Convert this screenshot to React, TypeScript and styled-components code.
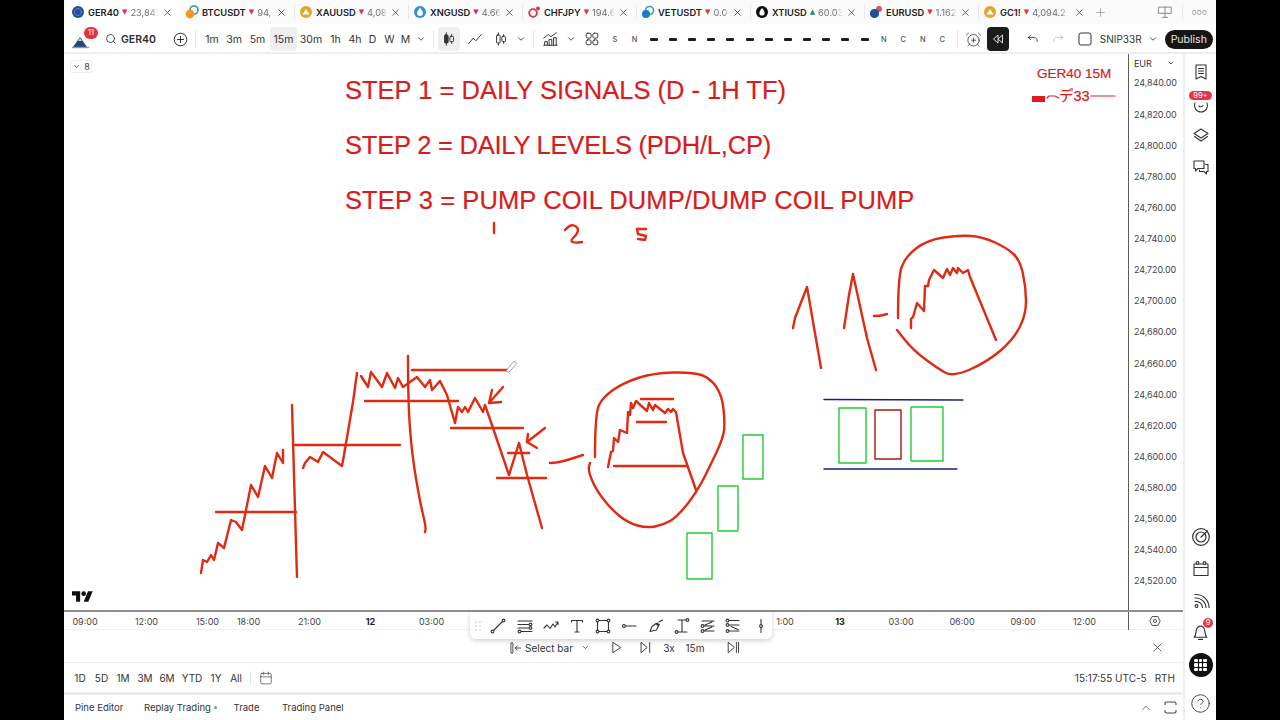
import React from 'react'
import styled, { createGlobalStyle } from 'styled-components'
import {
  AlarmClockPlus,
  Calendar,
  ChevronDown,
  ChevronUp,
  CircleHelp,
  Plus,
  Search,
  X,
} from 'lucide-react'

const GlobalStyle = createGlobalStyle`
  * {
    margin: 0;
    padding: 0;
    box-sizing: border-box;
  }

  html, body {
    width: 1280px;
    height: 720px;
    overflow: hidden;
    background: #000;
  }

  body {
    font-family: 'Inter', 'Liberation Sans', sans-serif;
    color: #2e2e2e;
    -webkit-font-smoothing: antialiased;
  }
`

const Root = styled.div`
  width: 1280px;
  height: 720px;
  padding: 0 64px;
  background: #000;
`

const Screen = styled.div`
  width: 1152px;
  height: 720px;
  display: flex;
  flex-direction: column;
  background: #fff;
  overflow: hidden;
`

/* top tabs */

const TabStrip = styled.div`
  height: 24px;
  flex: none;
  display: flex;
  align-items: center;
  padding-left: 2px;
  background: #fbfbfb;
`

const Tab = styled.div<{ $active?: boolean }>`
  width: 114px;
  height: 24px;
  flex: none;
  display: flex;
  align-items: center;
  gap: 3px;
  padding: 0 7px 0 5px;
  background: ${p => (p.$active ? '#fff' : 'transparent')};
  position: relative;

  & + &::before {
    content: '';
    position: absolute;
    left: 0;
    top: 5px;
    bottom: 5px;
    width: 1px;
    background: #e8e8e8;
  }
`

const TabName = styled.span`
  font-size: 9.3px;
  font-weight: 600;
  color: #222;
  white-space: nowrap;
`

const TabArrow = styled.span<{ $up?: boolean }>`
  font-family: 'DejaVu Sans', sans-serif;
  font-size: 7px;
  color: ${p => (p.$up ? '#1f8a70' : '#d8344a')};
`

const TabPrice = styled.span`
  flex: 1;
  min-width: 0;
  overflow: hidden;
  white-space: nowrap;
  font-size: 9.3px;
  color: #6f6f6f;
  -webkit-mask-image: linear-gradient(90deg, #000 70%, transparent 100%);
  mask-image: linear-gradient(90deg, #000 70%, transparent 100%);
`

const TabClose = styled(X)`
  flex: none;
  color: #333;
`

const TabTail = styled.div`
  flex: 1;
  display: flex;
  align-items: center;
  padding-left: 2px;
  color: #8a8a8a;
`

const TabTailRight = styled.div`
  margin-left: auto;
  display: flex;
  align-items: center;
  color: #888;
  padding-right: 9px;
  gap: 9px;
`

const TailDots = styled.span`
  font-size: 8px;
  letter-spacing: 0.3px;
  color: #999;
`

const TailSep = styled.span`
  width: 1px;
  height: 14px;
  background: #e8e8e8;
`

/* main toolbar */

const Toolbar = styled.div`
  height: 28px;
  flex: none;
  display: flex;
  align-items: center;
  padding: 2px 0 0 8px;
`

const Strip = styled.div`
  height: 2px;
  flex: none;
  background: #eeeeee;
`

const ToolCell = styled.div<{ $w: number; $active?: boolean; $dark?: boolean }>`
  width: ${p => p.$w}px;
  height: 24px;
  flex: none;
  display: flex;
  align-items: center;
  justify-content: center;
  border-radius: 4px;
  font-size: 10.5px;
  color: ${p => (p.$dark ? '#ddd' : '#333')};
  background: ${p => (p.$dark ? '#1b1b1b' : p.$active ? '#eeeeee' : 'transparent')};
`

const ToolSep = styled.span<{ $mx?: number }>`
  width: 1px;
  height: 18px;
  flex: none;
  background: #e6e6e6;
  margin: 0 ${p => p.$mx ?? 0}px;
`

const AvatarWrap = styled.div`
  width: 28px;
  height: 24px;
  flex: none;
  position: relative;
  display: flex;
  align-items: center;
`

const AvatarBadge = styled.span`
  position: absolute;
  top: 0;
  left: 12px;
  width: 14px;
  height: 12px;
  border-radius: 6px;
  background: #e0343f;
  color: #fff;
  font-size: 7.5px;
  line-height: 12px;
  text-align: center;
`

const SymbolBox = styled.div`
  width: 68px;
  flex: none;
  display: flex;
  align-items: center;
  gap: 4px;
  padding-left: 5px;
  font-size: 10.5px;
  font-weight: 600;
  color: #2e2e2e;
`

const Letter = styled.span`
  font-size: 7.5px;
  font-weight: 500;
  color: #555;
`

const Dash = styled.span`
  width: 8px;
  height: 3px;
  border-radius: 1px;
  background: #1d1d1d;
`

const TemplateName = styled.span`
  width: 50px;
  flex: none;
  font-size: 10px;
  color: #333;
  padding-left: 2px;
  white-space: nowrap;
`

const PublishBtn = styled.button`
  width: 48px;
  height: 19px;
  flex: none;
  margin-left: 6px;
  border: 0;
  border-radius: 10px;
  background: #161616;
  color: #e8e8e8;
  font-family: inherit;
  font-size: 10.5px;
`

/* body */

const Body = styled.div`
  flex: 1;
  min-height: 0;
  display: flex;
`

const Workspace = styled.div`
  width: 1119px;
  flex: none;
  display: flex;
  flex-direction: column;
  position: relative;
`

const ChartRow = styled.div`
  height: 558px;
  flex: none;
  display: flex;
  border-bottom: 2px solid #8d8d8d;
`

const Canvas = styled.div`
  flex: 1;
  position: relative;
  overflow: hidden;
`

const Drawing = styled.svg`
  position: absolute;
  inset: 0;
  width: 1064px;
  height: 556px;
`

const Note = styled.div<{ $x: number; $y: number; $size: number; $ls?: number }>`
  position: absolute;
  left: ${p => p.$x}px;
  top: ${p => p.$y}px;
  font-family: 'Liberation Sans', Arial, sans-serif;
  font-size: ${p => p.$size}px;
  letter-spacing: ${p => p.$ls ?? 0}px;
  line-height: 1;
  color: #d81c1c;
  -webkit-text-stroke: 0.2px #d81c1c;
  white-space: nowrap;
`

const NoteJa = styled(Note)`
  font-family: 'Liberation Sans', 'Noto Sans CJK JP', sans-serif;
`

const LegendChip = styled.div`
  position: absolute;
  left: 6px;
  top: 6px;
  width: 22px;
  height: 13px;
  display: flex;
  align-items: center;
  justify-content: center;
  gap: 3px;
  border: 1px solid #eeeeee;
  border-radius: 2px;
  font-size: 9px;
  color: #444;
`

const Logo = styled.svg`
  position: absolute;
  left: 8px;
  bottom: 7px;
  width: 21px;
  height: 14px;
`

const PriceScale = styled.div`
  width: 55px;
  flex: none;
  border-left: 1px solid #5c5c5c;
  padding-left: 5px;
  font-size: 9px;
  letter-spacing: -0.1px;
  color: #444;
`

const Currency = styled.div`
  height: 18.4px;
  display: flex;
  align-items: center;
  justify-content: space-between;
  padding-right: 8px;
  font-size: 9px;
  color: #333;
`

const PriceLabel = styled.div`
  height: 31.125px;
  line-height: 21px;
  white-space: nowrap;
`

const TimeAxis = styled.div`
  height: 18px;
  flex: none;
  display: flex;
  align-items: center;
  padding-top: 1px;
  font-size: 9px;
  color: #444;
  border-bottom: 1px solid #f0f0f0;
`

const Tick = styled.span<{ $w: number; $bold?: boolean }>`
  width: ${p => p.$w}px;
  flex: none;
  text-align: center;
  font-weight: ${p => (p.$bold ? 700 : 400)};
  color: ${p => (p.$bold ? '#222' : '#444')};
`

const AxisCorner = styled.div`
  width: 55px;
  height: 18px;
  flex: none;
  margin-left: auto;
  padding-right: 2px;
  border-left: 1px solid #5c5c5c;
  display: flex;
  align-items: center;
  justify-content: center;
`

const FloatingTools = styled.div`
  position: absolute;
  left: 406px;
  top: 558px;
  width: 302px;
  height: 27px;
  display: flex;
  align-items: center;
  padding-left: 1.5px;
  background: #fff;
  border-radius: 0 0 6px 6px;
  box-shadow: 0 2px 5px rgba(0, 0, 0, 0.18);
`

const ToolGlyph = styled.div<{ $w: number }>`
  width: ${p => p.$w}px;
  flex: none;
  display: flex;
  justify-content: center;
  color: #333;
`

const ReplayBar = styled.div`
  height: 33px;
  flex: none;
  display: flex;
  align-items: center;
  padding: 3px 18px 0 444px;
  border-bottom: 1px solid #f0f0f0;
  font-size: 10px;
  color: #333;
`

const ReplayItem = styled.div<{ $w: number }>`
  width: ${p => p.$w}px;
  flex: none;
  display: flex;
  align-items: center;
  justify-content: center;
  white-space: nowrap;
`

const CloseSlot = styled.div`
  margin-left: auto;
  display: flex;
`

const RangeBar = styled.div`
  height: 29px;
  flex: none;
  display: flex;
  align-items: center;
  padding-left: 5px;
  padding-right: 8px;
  font-size: 10px;
  color: #333;
`

const RangeBtn = styled.span<{ $w: number }>`
  width: ${p => p.$w}px;
  flex: none;
  text-align: center;
`

const RangeRight = styled.div`
  margin-left: auto;
  display: flex;
  gap: 8px;
  font-size: 10px;
  color: #333;
  white-space: nowrap;
`

const Gap = styled.div`
  height: 3px;
  flex: none;
  background: #ebebeb;
`

const PanelTabs = styled.div`
  flex: 1;
  display: flex;
  align-items: center;
  padding: 0 6px 0 11px;
  font-size: 9.5px;
  color: #333;
`

const PanelTab = styled.div<{ $w: number; $active?: boolean }>`
  width: ${p => p.$w}px;
  height: 17px;
  flex: none;
  display: flex;
  align-items: center;
  gap: 3px;
  justify-content: ${p => (p.$active ? 'center' : 'flex-start')};
  white-space: nowrap;
`

const GreenDot = styled.span`
  width: 3px;
  height: 3px;
  border-radius: 50%;
  background: #55b57c;
`

const PanelRight = styled.div`
  margin-left: auto;
  display: flex;
  align-items: center;
  gap: 11px;
  color: #444;
`

/* right rail */

const SideBar = styled.div`
  flex: 1;
  display: flex;
  flex-direction: column;
  align-items: center;
  padding-top: 2px;
  border-left: 2px solid #efefef;
  color: #333;
`

const SideItem = styled.div<{ $h?: number; $auto?: boolean; $pt?: number }>`
  width: 31px;
  height: ${p => p.$h ?? 32}px;
  flex: none;
  position: relative;
  display: flex;
  align-items: center;
  justify-content: center;
  padding-top: ${p => p.$pt ?? 0}px;
  margin-top: ${p => (p.$auto ? 'auto' : 0)};
`

const SideBadge = styled.span<{ $wide?: boolean }>`
  position: absolute;
  top: ${p => (p.$wide ? 3 : 2)}px;
  left: ${p => (p.$wide ? 4 : 18)}px;
  min-width: ${p => (p.$wide ? 23 : 10)}px;
  height: ${p => (p.$wide ? 9 : 10)}px;
  border-radius: 5px;
  background: #e5364a;
  color: #fff;
  font-size: 7.5px;
  line-height: ${p => (p.$wide ? 9 : 10)}px;
  text-align: center;
`

const AppsDisc = styled.div`
  width: 24px;
  height: 24px;
  border-radius: 50%;
  background: #111;
  display: grid;
  grid-template-columns: repeat(3, 3.5px);
  grid-auto-rows: 3.5px;
  gap: 1.2px;
  align-content: center;
  justify-content: center;
`

const AppsDot = styled.span`
  background: #fff;
  border-radius: 1px;
`

/* helpers */

const tabs = [
  { icon: 'eu', name: 'GER40', price: '23,842', active: true },
  { icon: 'btc', name: 'BTCUSDT', price: '94,2' },
  { icon: 'gold', name: 'XAUUSD', price: '4,083' },
  { icon: 'gas', name: 'XNGUSD', price: '4.660' },
  { icon: 'chf', name: 'CHFJPY', price: '194.6' },
  { icon: 'vet', name: 'VETUSDT', price: '0.01' },
  { icon: 'oil', name: 'XTIUSD', price: '60.031', up: true },
  { icon: 'eur', name: 'EURUSD', price: '1.162' },
  { icon: 'gold', name: 'GC1!', price: '4,094.2 -' },
]

const intervals: [string, number][] = [
  ['1m', 22], ['3m', 22], ['5m', 25], ['15m', 27], ['30m', 28], ['1h', 21],
  ['4h', 18], ['D', 17], ['W', 17], ['M', 15],
]

const prices = [
  '24,840.00', '24,820.00', '24,800.00', '24,780.00', '24,760.00', '24,740.00',
  '24,720.00', '24,700.00', '24,680.00', '24,660.00', '24,640.00', '24,620.00',
  '24,600.00', '24,580.00', '24,560.00', '24,540.00', '24,520.00',
]

const ticks: [string, number, boolean?][] = [
  ['09:00', 42], ['12:00', 81], ['15:00', 41], ['18:00', 41], ['21:00', 81],
  ['12', 41, true], ['03:00', 81], ['', 292], ['1:00', 42], ['13', 68, true],
  ['03:00', 54], ['06:00', 68], ['09:00', 54], ['12:00', 69],
]

const ranges: [string, number][] = [
  ['1D', 22], ['5D', 21], ['1M', 22], ['3M', 22], ['6M', 22], ['YTD', 28],
  ['1Y', 20], ['All', 20],
]

type Pt = [number, number]

const line = (pts: Pt[]) => pts.map(p => p.join(',')).join(' ')

// rounds a hand drawn loop through the midpoints of its points
const smooth = (pts: Pt[]) => {
  let d = `M${pts[0][0]} ${pts[0][1]}`
  for (let i = 1; i < pts.length - 1; i++) {
    const mx = (pts[i][0] + pts[i + 1][0]) / 2
    const my = (pts[i][1] + pts[i + 1][1]) / 2
    d += ` Q${pts[i][0]} ${pts[i][1]} ${mx} ${my}`
  }
  const last = pts[pts.length - 1]
  return `${d} L${last[0]} ${last[1]}`
}

const squiggles: Pt[][] = [
  [[201, 573], [203, 560], [207, 562], [211, 555], [214, 560], [218, 543], [224, 548], [231, 520], [236, 522], [242, 530], [251, 485], [258, 497], [265, 466], [272, 478], [277, 453], [283, 463], [283, 450]],
  [[303, 468], [305, 463], [310, 457], [318, 462], [323, 452], [342, 466], [344, 455], [353, 402], [357, 373]],
  [[361, 376], [368, 387], [371, 372], [382, 387], [387, 373], [395, 388], [398, 378], [403, 387], [417, 377], [425, 387], [430, 380], [432, 390], [440, 381], [447, 395], [455, 423], [458, 407], [462, 412], [465, 407], [468, 412], [475, 398], [483, 412], [485, 405], [493, 428], [509, 475], [519, 443], [527, 475], [542, 528]],
  [[489, 403], [503, 387]],
  [[492, 390], [489, 403], [501, 402]],
  [[527, 442], [545, 428]],
  [[528, 434], [527, 442], [537, 448]],
  [[608, 467], [611, 452], [613, 451], [614, 438], [618, 442], [620, 430], [627, 433], [628, 412], [630, 415], [631, 403], [633, 408], [636, 401], [647, 411], [649, 403], [653, 410], [655, 405], [665, 413], [668, 409], [671, 412], [673, 409], [676, 412], [683, 453], [696, 490]],
  [[793, 328], [795, 318], [807, 287], [821, 368]],
  [[844, 328], [849, 295], [853, 274], [867, 338], [876, 370]],
  [[911, 328], [911, 319], [913, 317], [917, 303], [924, 311], [925, 286], [928, 286], [929, 280], [934, 270], [943, 278], [947, 269], [950, 275], [953, 268], [957, 273], [958, 268], [963, 273], [968, 270], [970, 277], [996, 340]],
  [[494, 223], [494, 233]],
  [[646, 229], [637, 229], [638, 234], [646, 236], [645, 240], [638, 239]],
]

const loops: Pt[][] = [
  [[292, 405], [295, 512], [297, 577]],
  [[408, 356], [408, 402], [412, 455], [420, 502], [426, 527], [425, 532]],
  [[550, 463], [558, 463], [583, 455]],
  [[595, 457], [595, 413], [603, 397], [623, 383], [653, 373], [693, 372], [710, 378], [722, 395], [725, 423], [723, 438], [713, 460], [697, 492], [677, 517], [663, 525], [647, 528], [628, 523], [610, 508], [595, 488], [588, 470], [590, 463]],
  [[898, 318], [898, 278], [905, 257], [927, 240], [960, 235], [983, 237], [1007, 248], [1020, 260], [1026, 288], [1026, 315], [1013, 340], [987, 362], [953, 377], [937, 368], [913, 350], [897, 330]],
  [[874, 316], [880, 316], [887, 314]],
  [[565, 230], [570, 224], [578, 227], [578, 233], [570, 241], [575, 243], [582, 242]],
]

const levels: [number, number, number][] = [
  [216, 296, 512], [295, 400, 445], [412, 510, 370], [365, 458, 401], [451, 523, 428],
  [508, 529, 453], [497, 546, 478], [641, 673, 399], [637, 666, 422], [614, 687, 466],
]

const boxes: [number, number, number, number, string][] = [
  [743, 435, 20, 44, '#22cc33'], [718, 486, 20, 45, '#22cc33'], [687, 533, 25, 46, '#22cc33'],
  [839, 408, 27, 55, '#22cc33'], [875, 410, 26, 49, '#a81818'], [911, 407, 32, 54, '#22cc33'],
]

const TabIcon = ({ kind }: { kind: string }) => {
  const art: Record<string, React.ReactNode> = {
    eu: (
      <>
        <circle cx="7" cy="7" r="6" fill="#1f4e9e" />
        <circle cx="7" cy="7" r="3.4" fill="none" stroke="#9ec0e8" strokeWidth="1" strokeDasharray="1 1" />
      </>
    ),
    btc: (
      <>
        <circle cx="9" cy="5" r="4" fill="none" stroke="#2c9aa8" strokeWidth="1.6" />
        <circle cx="5" cy="9" r="4.4" fill="#f09a20" />
      </>
    ),
    gold: (
      <>
        <circle cx="7" cy="7" r="6" fill="#e3a52c" />
        <path d="M3.5 9.5 L7 4 L10.5 9.5 Z" fill="#fff" />
      </>
    ),
    gas: (
      <>
        <circle cx="7" cy="7" r="6" fill="#2f8fdc" />
        <path d="M7 2.8 C9 5.4 10 6.6 10 8 A3 3 0 0 1 4 8 C4 6.6 5 5.4 7 2.8 Z" fill="#fff" />
      </>
    ),
    chf: (
      <>
        <circle cx="6" cy="8" r="3.8" fill="none" stroke="#d8343e" strokeWidth="1.8" />
        <circle cx="11" cy="3.5" r="2" fill="#d8343e" />
      </>
    ),
    vet: (
      <>
        <circle cx="8.5" cy="5.5" r="4" fill="none" stroke="#25a6b8" strokeWidth="1.6" />
        <circle cx="5" cy="9" r="4" fill="#1f78c8" />
      </>
    ),
    oil: (
      <>
        <circle cx="7" cy="7" r="6" fill="#0c0c0c" />
        <path d="M7 3 C8.8 5.4 9.6 6.6 9.6 8 A2.6 2.6 0 0 1 4.4 8 C4.4 6.6 5.2 5.4 7 3 Z" fill="#fff" />
      </>
    ),
    eur: (
      <>
        <circle cx="10" cy="4" r="3" fill="#d8545e" />
        <circle cx="5.5" cy="8.5" r="4.6" fill="#1f4e9e" />
      </>
    ),
  }
  return (
    <svg width="14" height="14" viewBox="0 0 14 14" style={{ flex: 'none' }}>
      {art[kind]}
    </svg>
  )
}

const Glyph = ({ children, size = 16 }: { children: React.ReactNode; size?: number }) => (
  <svg width={size} height={size} viewBox="0 0 18 18" fill="none" stroke="currentColor" strokeWidth="1.1" strokeLinecap="round" strokeLinejoin="round">
    {children}
  </svg>
)

const End = ({ x, y }: { x: number; y: number }) => <circle cx={x} cy={y} r="1.4" fill="#fff" />

const drawTools: [number, React.ReactNode][] = [
  [28, <><path d="M4 14 L14 4" /><End x={3.5} y={14.5} /><End x={14.5} y={3.5} /></>],
  [26, <><path d="M2 4 H16 M2 7.5 H13 M2 11 H13 M5 14.5 H16" /><End x={14.5} y={7.5} /><End x={14.5} y={11} /><End x={3.5} y={14.5} /></>],
  [27, <path d="M2 11 L5 8 L8 11.5 L11 7 L13 10 L16 5 M13.5 5 H16 V7.5" />],
  [25, <path d="M3.5 5 V3.5 H14.5 V5 M9 3.5 V15 M7 15 H11" />],
  [26, <><path d="M4 3.5 H14 M4 14.5 H14 M3.5 4 V14 M14.5 4 V14" /><End x={3.5} y={3.5} /><End x={14.5} y={3.5} /><End x={3.5} y={14.5} /><End x={14.5} y={14.5} /></>],
  [27, <><path d="M6 9 H16" /><End x={4} y={9} /></>],
  [26, <path d="M3 14.5 L5 9.5 L9 6.5 L11.5 9 L9.5 13 Z M10 6 L12.5 8 M12 5 L15.5 3" />],
  [26, <><path d="M5 3 H13 M9 3 V15 M4.5 15 H14" /><End x={14.5} y={3} /><End x={3.5} y={15} /></>],
  [26, <><path d="M3 4 H15 M5 9 H15 M5 14 H15 M6 8 L13 5 M6 13 L13 10" /><End x={3.5} y={9} /><End x={3.5} y={14} /></>],
  [25, <><path d="M5 3.5 H15 M5 8 H15 M5 14 H15 M7 9.5 L14 12.5" /><End x={3.5} y={3.5} /><End x={3.5} y={8} /><End x={3.5} y={14} /></>],
  [30, <><path d="M9 2.5 V15.5" /><circle cx="9" cy="9" r="1.4" fill="#fff" /></>],
]

const App: React.FC = () => (
  <>
    <GlobalStyle />
    <Root>
      <Screen>
        <TabStrip>
          {tabs.map(tab => (
            <Tab key={tab.name} $active={tab.active}>
              <TabIcon kind={tab.icon} />
              <TabName>{tab.name}</TabName>
              <TabArrow $up={tab.up}>{tab.up ? '▲' : '▼'}</TabArrow>
              <TabPrice>{tab.price}</TabPrice>
              <TabClose size={11} strokeWidth={1.6} />
            </Tab>
          ))}
          <TabTail>
            <Plus size={13} strokeWidth={1.3} />
            <TabTailRight>
              <Glyph>
                <path d="M2 3.5 H16 V10.5 H2 Z M9 10.5 V15 M6 15 H12 M9 3.5 V10.5" />
              </Glyph>
              <TailSep />
              <TailDots>ooo</TailDots>
            </TabTailRight>
          </TabTail>
        </TabStrip>

        <Toolbar>
          <AvatarWrap>
            <svg width="18" height="14" viewBox="0 0 18 14" style={{ marginTop: 5 }}>
              <path d="M1 12 L8 2 L15 12 Z" fill="#27476e" />
              <path d="M6 6 L8 3 L10 6 Z" fill="#bcd2e8" />
              <path d="M0 12.5 H17" stroke="#6aa0c8" strokeWidth="1.4" />
            </svg>
            <AvatarBadge>11</AvatarBadge>
          </AvatarWrap>
          <SymbolBox>
            <Search size={12} strokeWidth={1.7} />
            GER40
          </SymbolBox>
          <ToolCell $w={24}>
            <svg width="15" height="15" viewBox="0 0 15 15" fill="none" stroke="#333" strokeWidth="1">
              <circle cx="7.5" cy="7.5" r="6.3" />
              <path d="M7.5 4 V11 M4 7.5 H11" />
            </svg>
          </ToolCell>
          <ToolSep $mx={3} />
          <ToolCell $w={2} />
          {intervals.map(([label, w]) => (
            <ToolCell key={label} $w={w} $active={label === '15m'}>{label}</ToolCell>
          ))}
          <ToolCell $w={16}><ChevronDown size={10} /></ToolCell>
          <ToolSep $mx={4} />
          <ToolCell $w={22} $active>
            <Glyph>
              <path d="M6 2 V4.5 M6 13.5 V16 M12 4 V6 M12 12 V14" />
              <rect x="4" y="4.5" width="4" height="9" rx="1" fill="currentColor" />
              <rect x="10" y="6" width="4" height="6" rx="1" />
            </Glyph>
          </ToolCell>
          <ToolCell $w={30}>
            <Glyph><path d="M2 14 L7 8 L10 11 L16 4" /></Glyph>
          </ToolCell>
          <ToolCell $w={22}>
            <Glyph>
              <path d="M6 2 V4.5 M6 13.5 V16 M12 4 V6 M12 12 V14" />
              <rect x="4" y="4.5" width="4" height="9" rx="1" />
              <rect x="10" y="6" width="4" height="6" rx="1" />
            </Glyph>
          </ToolCell>
          <ToolCell $w={18}><ChevronDown size={10} /></ToolCell>
          <ToolSep $mx={3} />
          <ToolCell $w={26}>
            <Glyph>
              <path d="M2 8 L7 4 L10 6.5 L16 2 M3 16 V12 H6 V16 M8 16 V9.5 H11 V16 M13 16 V7.5 H16 V16 M2 16 H17" />
            </Glyph>
          </ToolCell>
          <ToolCell $w={16}><ChevronDown size={10} /></ToolCell>
          <ToolCell $w={26}>
            <Glyph>
              <rect x="2.5" y="2.5" width="5.5" height="5.5" rx="1.8" />
              <rect x="10" y="2.5" width="5.5" height="5.5" rx="1.8" />
              <rect x="2.5" y="10" width="5.5" height="5.5" rx="1.8" />
              <rect x="10" y="10" width="5.5" height="5.5" rx="1.8" />
            </Glyph>
          </ToolCell>
          <ToolCell $w={20}><Letter>S</Letter></ToolCell>
          <ToolCell $w={19}><Letter>N</Letter></ToolCell>
          {Array.from({ length: 12 }, (_, i) => (
            <ToolCell key={i} $w={19.2}><Dash /></ToolCell>
          ))}
          <ToolCell $w={19}><Letter>N</Letter></ToolCell>
          <ToolCell $w={20}><Letter>C</Letter></ToolCell>
          <ToolCell $w={19}><Letter>N</Letter></ToolCell>
          <ToolCell $w={20}><Letter>C</Letter></ToolCell>
          <ToolSep $mx={5} />
          <ToolCell $w={20}>
            <AlarmClockPlus size={17} strokeWidth={1.1} />
          </ToolCell>
          <ToolCell $w={4} />
          <ToolCell $w={22} $dark>
            <svg width="12" height="12" viewBox="0 0 12 12" fill="none" stroke="#ddd" strokeWidth="1">
              <path d="M6 2 L1.5 6 L6 10 Z M10.5 2 L6 6 L10.5 10 Z" />
            </svg>
          </ToolCell>
          <ToolCell $w={12.5} />
          <ToolCell $w={22}>
            <Glyph size={14}><path d="M6 4 L3 7 L6 10 M3 7 H11 C13.5 7 14.5 9 14.5 12" /></Glyph>
          </ToolCell>
          <ToolCell $w={28}>
            <span style={{ color: '#bbb', display: 'flex' }}>
              <Glyph size={14}><path d="M12 4 L15 7 L12 10 M15 7 H7 C4.5 7 3.5 9 3.5 12" /></Glyph>
            </span>
          </ToolCell>
          <ToolCell $w={26}>
            <svg width="14" height="14" viewBox="0 0 14 14" fill="none" stroke="#333" strokeWidth="1">
              <rect x="1" y="1" width="12" height="12" rx="2" />
            </svg>
          </ToolCell>
          <TemplateName>SNIP33R</TemplateName>
          <ToolCell $w={11}><ChevronDown size={10} /></ToolCell>
          <PublishBtn>Publish</PublishBtn>
        </Toolbar>
        <Strip />

        <Body>
          <Workspace>
            <ChartRow>
              <Canvas>
                <Drawing viewBox="64 54 1064 556" fill="none" strokeLinecap="round" strokeLinejoin="round">
                  <g stroke="#e02a12" strokeWidth="2.4">
                    {squiggles.map((pts, i) => <polyline key={i} points={line(pts)} />)}
                    {loops.map((pts, i) => <path key={i} d={smooth(pts)} />)}
                    {levels.map(([x1, x2, y], i) => <path key={i} d={`M${x1} ${y} H${x2}`} />)}
                  </g>
                  <path d="M824 399.5 L963 400 M824 469 H957" stroke="#14207a" strokeWidth="1.4" />
                  {boxes.map(([x, y, w, h, color], i) => (
                    <rect key={i} x={x} y={y} width={w} height={h} stroke={color} strokeWidth="1.4" />
                  ))}
                  <path d="M506 371 L514 361 L517 363.5 L509 372 Z" stroke="#9a9a9a" strokeWidth="0.9" fill="#fff" />
                  <rect x="1032" y="96" width="13" height="6" fill="#e01b1b" />
                  <path d="M1047 98 L1049 96 H1055 L1059 98 M1091 96 H1115" stroke="#d8232a" strokeWidth="1.2" />
                </Drawing>
                <Note $x={281} $y={24} $size={25.5}>STEP 1 = DAILY SIGNALS (D - 1H TF)</Note>
                <Note $x={281} $y={79} $size={25.5} $ls={-0.22}>STEP 2 = DAILY LEVELS (PDH/L,CP)</Note>
                <Note $x={281} $y={134} $size={25.5} $ls={0.1}>STEP 3 = PUMP COIL DUMP/DUMP COIL PUMP</Note>
                <Note $x={973} $y={13} $size={13.5}>GER40 15M</Note>
                <NoteJa $x={995} $y={35} $size={14.5}>デ33</NoteJa>
                <LegendChip>
                  <ChevronDown size={9} strokeWidth={2} />
                  8
                </LegendChip>
                <Logo viewBox="0 0 36 24" fill="#111">
                  <path d="M14 22H7V11H0V4h14v18zM28 22h-8l7.5-18h8L28 22z" />
                  <circle cx="20" cy="8" r="4" />
                </Logo>
              </Canvas>
              <PriceScale>
                <Currency>
                  EUR
                  <ChevronDown size={8} strokeWidth={2.5} />
                </Currency>
                {prices.map(p => <PriceLabel key={p}>{p}</PriceLabel>)}
              </PriceScale>
            </ChartRow>

            <TimeAxis>
              {ticks.map(([label, w, bold], i) => (
                <Tick key={i} $w={w} $bold={bold}>{label}</Tick>
              ))}
              <AxisCorner>
                <svg width="12" height="12" viewBox="0 0 12 12" fill="none" stroke="#555" strokeWidth="1">
                  <path d="M3.2 1.5 H8.8 L11.2 6 L8.8 10.5 H3.2 L0.8 6 Z" />
                  <circle cx="6" cy="6" r="1.6" />
                </svg>
              </AxisCorner>
            </TimeAxis>

            <FloatingTools>
              <ToolGlyph $w={12}>
                <svg width="6" height="10" viewBox="0 0 6 10" fill="#c4c4c4">
                  {[1, 5, 9].flatMap(y => [1, 5].map(x => <circle key={`${x}${y}`} cx={x} cy={y} r="0.8" />))}
                </svg>
              </ToolGlyph>
              {drawTools.map(([w, art], i) => (
                <ToolGlyph key={i} $w={w}><Glyph size={18}>{art}</Glyph></ToolGlyph>
              ))}
            </FloatingTools>

            <ReplayBar>
              <ReplayItem $w={16}>
                <Glyph size={14}><path d="M3 2.5 H5 V15.5 H3 Z M15 9 H8 M11 6 L8 9 L11 12" /></Glyph>
              </ReplayItem>
              <ReplayItem $w={50}>Select bar</ReplayItem>
              <ReplayItem $w={22}><ChevronDown size={9} /></ReplayItem>
              <ReplayItem $w={41}>
                <Glyph size={15}><path d="M5 3 L14 9 L5 15 Z" /></Glyph>
              </ReplayItem>
              <ReplayItem $w={16}>
                <Glyph size={15}><path d="M4 3 L11 9 L4 15 Z M14 3 V15" /></Glyph>
              </ReplayItem>
              <ReplayItem $w={32}>3x</ReplayItem>
              <ReplayItem $w={20}>15m</ReplayItem>
              <ReplayItem $w={56}>
                <Glyph size={15}><path d="M3 3 L10 9 L3 15 Z M12.5 3 V15 M15 3 V15" /></Glyph>
              </ReplayItem>
              <CloseSlot><X size={15} strokeWidth={1.2} /></CloseSlot>
            </ReplayBar>

            <RangeBar>
              {ranges.map(([label, w]) => <RangeBtn key={label} $w={w}>{label}</RangeBtn>)}
              <ToolSep $mx={4} style={{ height: 14 }} />
              <ToolCell $w={22}><Calendar size={14} strokeWidth={1.1} /></ToolCell>
              <RangeRight>
                <span>15:17:55 UTC-5</span>
                <span>RTH</span>
              </RangeRight>
            </RangeBar>
            <Gap />
            <PanelTabs>
              <PanelTab $w={69}>Pine Editor</PanelTab>
              <PanelTab $w={81}>Replay Trading<GreenDot /></PanelTab>
              <PanelTab $w={43} $active>Trade</PanelTab>
              <PanelTab $w={14} />
              <PanelTab $w={70}>Trading Panel</PanelTab>
              <PanelRight>
                <ChevronUp size={14} strokeWidth={1.2} />
                <svg width="13" height="13" viewBox="0 0 13 13" fill="none" stroke="#444" strokeWidth="1.1">
                  <path d="M1 4 V2.5 A1.5 1.5 0 0 1 2.5 1 H10.5 A1.5 1.5 0 0 1 12 2.5 V4 M1 9 V10.5 A1.5 1.5 0 0 0 2.5 12 H10.5 A1.5 1.5 0 0 0 12 10.5 V9" />
                </svg>
              </PanelRight>
            </PanelTabs>
          </Workspace>

          <SideBar>
            <SideItem>
              <Glyph size={18}>
                <path d="M4 2 H14 V16 L9 13.5 L4 16 Z M6.5 5.5 H11.5 M6.5 8 H11.5 M6.5 10.5 H11.5" />
              </Glyph>
            </SideItem>
            <SideItem $h={31}>
              <Glyph size={18}>
                <path d="M3 8 A6.5 6.5 0 1 0 15 8 M7 11 C8 12 10 12 11 10.5" />
              </Glyph>
              <SideBadge $wide>99+</SideBadge>
            </SideItem>
            <SideItem $h={32}>
              <Glyph size={18}>
                <path d="M9 3 L16 7.5 L9 12 L2 7.5 Z M2.5 10.5 L9 15 L15.5 10.5" />
              </Glyph>
            </SideItem>
            <SideItem $h={32}>
              <Glyph size={18}>
                <path d="M2 3 H12 V10.5 H6 L3.5 13 V10.5 H2 Z M13.5 6.5 H16 V13.5 H14.5 V16 L12 13.5 H7.5 V12" />
              </Glyph>
            </SideItem>

            <SideItem $auto>
              <Glyph size={20}>
                <circle cx="9" cy="9" r="7.5" />
                <circle cx="9" cy="9" r="4.5" />
                <path d="M9 9 L15 3.5" />
              </Glyph>
            </SideItem>
            <SideItem>
              <Glyph size={18}>
                <path d="M2 4 H16 V15.5 H2 Z M2 7.5 H16" />
                <End x={5.5} y={3} />
                <End x={12.5} y={3} />
              </Glyph>
            </SideItem>
            <SideItem $h={31}>
              <Glyph size={18}>
                <path d="M3 6 A10 10 0 0 1 14 15.5 M3 9.5 A6.5 6.5 0 0 1 10.5 15.5 M3 2.5 A13 13 0 0 1 17 15.5" />
                <circle cx="4.5" cy="14" r="1.4" />
              </Glyph>
            </SideItem>
            <SideItem $h={32}>
              <Glyph size={19}>
                <path d="M3 13.5 C5 11.5 4.5 9 5 7 C5.8 4 7.5 3 9 3 C11 3 12.5 4.5 13 7 C13.5 9 13 11.5 15 13.5 Z M7 15.5 H11" />
              </Glyph>
              <SideBadge>9</SideBadge>
            </SideItem>
            <SideItem $h={34}>
              <AppsDisc>
                {Array.from({ length: 9 }, (_, i) => <AppsDot key={i} />)}
              </AppsDisc>
            </SideItem>
            <SideItem $h={38} $pt={4}>
              <CircleHelp size={21} strokeWidth={1} />
            </SideItem>
          </SideBar>
        </Body>
      </Screen>
    </Root>
  </>
)

export default App
